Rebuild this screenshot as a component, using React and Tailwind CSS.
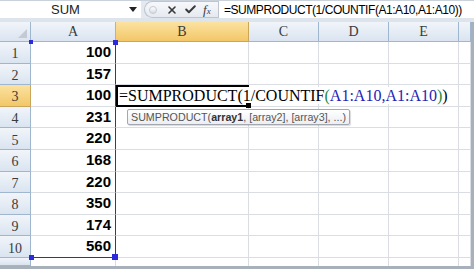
import { X, Check } from 'lucide-react';

const values = [100, 157, 100, 231, 220, 168, 220, 350, 174, 560];
const letters = ['A', 'B', 'C', 'D', 'E'];

const headerCell = 'flex items-center justify-center border-r border-b border-[#9eb6ce] bg-gradient-to-b from-[#f1f5fa] to-[#dae4f0] text-[#3b3b3b]';
const activeHeader = 'flex items-center justify-center border-r border-b border-[#c9a65a] bg-gradient-to-b from-[#fbe2a0] to-[#f2c767] text-[#3b3b3b]';
const cell = 'border-r border-b border-[#dadde2] bg-white';

const FormulaText = () => (
  <>
    <span>=SUMPRODUCT(1/COUNTIF</span>
    <span className="text-[#1d8a3c]">(</span>
    <span className="text-[#2323b4]">A1:A10,A1:A10</span>
    <span className="text-[#1d8a3c]">)</span>
    <span>)</span>
  </>
);

const FormulaBar = () => (
  <div className="flex flex-col">
    <div className="flex h-[18px] border-t border-[#c9d1db] bg-[#e4e9ef]">
      <div className="flex w-[141px] shrink-0 items-center bg-white">
        <span className="flex-1 text-center text-[13px] text-[#222] pl-[2px]">SUM</span>
        <svg width="8" height="5" viewBox="0 0 8 5" className="mr-[4px]">
          <polygon points="0,0 8,0 4,5" fill="#222" />
        </svg>
      </div>
      <div className="ml-[3px] flex w-[74px] shrink-0 items-center gap-[6px] rounded-l-full border border-r-0 border-[#bcc5d0] bg-gradient-to-b from-[#f6f8fb] to-[#e6eaf0] pl-[4px]">
        <div className="h-[8px] w-[8px] rounded-full border border-[#c4cad2] bg-gradient-to-b from-[#ffffff] to-[#d7dce3]" />
        <X size={12} strokeWidth={3.2} color="#3a3a3a" className="ml-[3px]" />
        <Check size={13} strokeWidth={3.6} color="#3a3a3a" />
        <span className="font-['Liberation_Serif',serif] text-[13px] italic text-[#3a3a3a] leading-none">
          f<span className="text-[9px]">x</span>
        </span>
      </div>
      <div className="flex min-w-0 flex-1 items-center overflow-hidden border-l border-[#bcc5d0] bg-white pl-[5px] text-[12px] tracking-[-0.45px] text-black whitespace-nowrap">
        =SUMPRODUCT(1/COUNTIF(A1:A10,A1:A10))
      </div>
    </div>
    <div className="h-[4px] bg-[#dde4ec]" />
  </div>
);

const Corner = ({ pos }) => <div className={`absolute z-20 bg-[#2b2bdc] ${pos}`} />;

const App = () => {
  return (
    <div className="h-[269px] w-[474px] overflow-hidden bg-white font-['Liberation_Sans',Arial,sans-serif]">
      <FormulaBar />

      <div className="grid grid-cols-[31px_85px_133px_70px_70px_70px_12px_3px] grid-rows-[20px_repeat(10,21.6px)_8px]">
        {/* header row */}
        <div className={`${headerCell} relative`}>
          <svg width="9" height="9" viewBox="0 0 9 9" className="absolute bottom-[3px] right-[3px]">
            <polygon points="9,0 9,9 0,9" fill="#c3cad3" />
          </svg>
        </div>
        {letters.map((l) => (
          <div
            key={l}
            className={`${l === 'B' ? activeHeader : headerCell} font-['Liberation_Serif',serif] text-[14px]`}
          >
            {l}
          </div>
        ))}
        <div className={headerCell} />
        <div className="bg-[#a8b0ba]" />

        {/* data rows */}
        {values.map((v, i) => {
          const r = i + 1;
          const active = r === 3;
          const last = r === 10;
          return [
            <div
              key={`h${r}`}
              className={`${active ? activeHeader : headerCell} font-['Liberation_Serif',serif] text-[14px] pt-[3px]`}
            >
              {r}
            </div>,
            <div
              key={`a${r}`}
              className={`relative flex items-center justify-end border-r-[1.5px] border-r-[#2b2bdc] border-b bg-white pr-[4px] text-[15px] font-bold text-black ${
                last ? 'border-b-[1.5px] border-b-[#2b2bdc]' : 'border-b-[#dadde2]'
              }`}
            >
              {v}
              {r === 1 && <Corner pos="-left-[2px] -top-[2px] h-[4px] w-[4px]" />}
              {r === 1 && <Corner pos="-right-[3px] -top-[2px] h-[5px] w-[5px]" />}
              {last && <Corner pos="-bottom-[3px] -left-[2px] h-[5px] w-[5px]" />}
              {last && <Corner pos="-bottom-[3px] -right-[3px] h-[6px] w-[6px]" />}
            </div>,
            active ? (
              <div
                key={`b${r}`}
                className="relative z-10 flex items-center border-y-2 border-l-2 border-black bg-white"
              >
                <span className="whitespace-nowrap bg-white pl-[1px] pr-[2px] font-['Liberation_Serif',serif] text-[16px] leading-[17px] text-black">
                  <FormulaText />
                </span>
                <div className="absolute -bottom-[3px] -right-[2px] h-[5px] w-[5px] bg-black" />
                <div className="absolute left-[9px] top-[22px] flex h-[16px] items-center whitespace-nowrap rounded-[2px] border border-[#a3a8b0] bg-gradient-to-b from-white to-[#eceef2] px-[3px] text-[10.7px] text-[#555] shadow-[1px_1px_1px_rgba(0,0,0,0.15)]">
                  SUMPRODUCT(<b className="text-[#333]">array1</b>, [array2], [array3], ...)
                </div>
              </div>
            ) : (
              <div key={`b${r}`} className={cell} />
            ),
            <div key={`c${r}`} className={cell} />,
            <div key={`d${r}`} className={cell} />,
            <div key={`e${r}`} className={cell} />,
            <div key={`f${r}`} className={cell} />,
            <div key={`g${r}`} className="bg-[#a8b0ba]" />,
          ];
        })}

        {/* partial row 11 */}
        <div className={headerCell} />
        <div className="border-r border-[#dadde2]" />
        <div className="border-r border-[#dadde2]" />
        <div className="border-r border-[#dadde2]" />
        <div className="border-r border-[#dadde2]" />
        <div className="border-r border-[#dadde2]" />
        <div className="border-r border-[#dadde2]" />
        <div className="bg-[#a8b0ba]" />
      </div>

      <div className="h-[3px] bg-[#a8b0ba]" />
    </div>
  );
};

export default App;
